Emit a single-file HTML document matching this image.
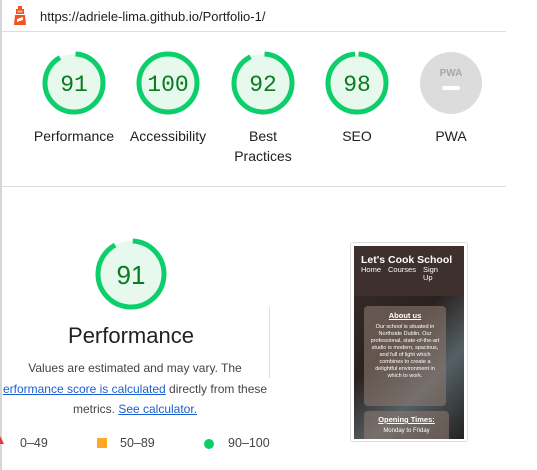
<!DOCTYPE html>
<html><head><meta charset="utf-8"><style>
*{margin:0;padding:0;box-sizing:border-box}
body{width:537px;height:470px;overflow:hidden;background:#fff;font-family:"Liberation Sans",Arial,sans-serif;position:relative;color:#212121}
.abs{position:absolute}
.lbl{position:absolute;width:94px;text-align:center;font-size:14px;line-height:20px;color:#212121}
a{color:#1a5fd0;text-decoration:underline}
</style></head><body>
<div class="abs" style="left:0;top:0;width:2px;height:470px;background:#d6d6d6"></div>
<div class="abs" style="left:2px;top:31px;width:504px;height:1px;background:#ddd"></div>
<div class="abs" style="left:2px;top:186px;width:504px;height:1px;background:#ddd"></div>
<svg class="abs" style="left:13px;top:6px" width="14" height="20" viewBox="0 0 14 20">
<rect x="5" y="0" width="4" height="3" fill="#f4511e"/>
<rect x="3" y="3" width="8" height="5" fill="#f4511e"/>
<rect x="4.5" y="4.5" width="5" height="2" fill="#ffab91"/>
<path d="M2 9h10l1 10H1z" fill="#f4511e"/>
<path d="M4 13l6-2v3l-6 2z" fill="#fff"/>
</svg>
<div class="abs" style="left:40px;top:9px;font-size:13px;color:#202020">https://adriele-lima.github.io/Portfolio-1/</div>

<svg class="abs" style="left:0;top:0" width="537" height="470">
<g font-family="Liberation Mono,monospace" font-size="23" fill="#0b7a22" text-anchor="middle">
<circle cx="74" cy="83" r="29" fill="#e7f8ec" stroke="#0cce6b" stroke-width="5" stroke-dasharray="165.8 200" transform="rotate(-87 74 83)"/>
<text x="74" y="91">91</text>
<circle cx="168" cy="83" r="29" fill="#e7f8ec" stroke="#0cce6b" stroke-width="5"/>
<text x="168" y="91">100</text>
<circle cx="263" cy="83" r="29" fill="#e7f8ec" stroke="#0cce6b" stroke-width="5" stroke-dasharray="167.6 200" transform="rotate(-87 263 83)"/>
<text x="263" y="91">92</text>
<circle cx="357" cy="83" r="29" fill="#e7f8ec" stroke="#0cce6b" stroke-width="5" stroke-dasharray="178.5 200" transform="rotate(-87 357 83)"/>
<text x="357" y="91">98</text>
<circle cx="451" cy="83" r="31" fill="#dcdcdc"/>
<text x="451" y="76" font-family="Liberation Sans,sans-serif" font-weight="bold" font-size="10" fill="#a8a8a8">PWA</text>
<rect x="442" y="86" width="18" height="4" rx="2" fill="#fff"/>
<circle cx="131" cy="274" r="33" fill="#e7f8ec" stroke="#0cce6b" stroke-width="5" stroke-dasharray="188.7 250" transform="rotate(-87 131 274)"/>
<text x="131" y="284" font-family="Liberation Sans,sans-serif" font-size="26">91</text>
</g>
<rect x="269" y="307" width="1" height="71" fill="#ddd"/>
<path d="M0 436l4 8h-4z" fill="#e53935"/>
<rect x="97" y="438" width="10" height="10" fill="#ffa726"/>
<circle cx="209" cy="444" r="5" fill="#0cce6b"/>
</svg>

<div class="lbl" style="left:27px;top:126px">Performance</div>
<div class="lbl" style="left:121px;top:126px">Accessibility</div>
<div class="lbl" style="left:216px;top:126px">Best<br>Practices</div>
<div class="lbl" style="left:310px;top:126px">SEO</div>
<div class="lbl" style="left:404px;top:126px">PWA</div>

<div class="abs" style="left:0;top:323px;width:262px;text-align:center;font-size:22px;color:#212121">Performance</div>
<div class="abs" style="left:-10px;top:358px;width:290px;text-align:center;font-size:12px;line-height:20.5px;color:#444">Values are estimated and may vary. The<br><a>erformance score is calculated</a> directly from these<br>metrics. <a>See calculator.</a></div>
<div class="abs" style="left:20px;top:436px;font-size:12.5px;color:#444">0–49</div>
<div class="abs" style="left:120px;top:436px;font-size:12.5px;color:#444">50–89</div>
<div class="abs" style="left:228px;top:436px;font-size:12.5px;color:#444">90–100</div>

<div class="abs" style="left:350px;top:242px;width:118px;height:200px;border:1px solid #ddd;border-radius:3px;background:#fff"></div>
<div class="abs" style="left:354px;top:246px;width:110px;height:193px;background:linear-gradient(135deg,#3a2d2a 0%,#2a2220 45%,#556066 70%,#222 100%);overflow:hidden;font-family:'Liberation Sans',sans-serif;color:#fff">
 <div style="background:#3d302d;height:50px;padding:8px 0 0 7px">
  <div style="font-size:10.5px;font-weight:bold">Let's Cook School</div>
  <div style="font-size:7.5px;line-height:8px;display:flex;gap:7px"><span>Home</span><span>Courses</span><span>Sign<br>Up</span></div>
 </div>
 <div style="position:absolute;left:10px;top:60px;width:82px;height:100px;background:rgba(140,120,110,.6);border-radius:4px;text-align:center;font-size:5.5px;line-height:7px;padding:6px 4px">
  <div style="font-size:7.5px;font-weight:bold;text-decoration:underline;margin-bottom:5px">About us</div>
  Our school is situated in Northside Dublin. Our professional, state-of-the-art studio is modern, spacious, and full of light which combines to create a delightful environment in which to work.
 </div>
 <div style="position:absolute;left:10px;top:165px;width:85px;height:40px;background:rgba(140,120,110,.6);border-radius:4px;text-align:center;font-size:7.5px;padding:4px">
  <div style="text-decoration:underline;font-weight:bold">Opening Times:</div><div style="font-size:6px;margin-top:4px">Monday to Friday</div>
 </div>
</div>
</body></html>
